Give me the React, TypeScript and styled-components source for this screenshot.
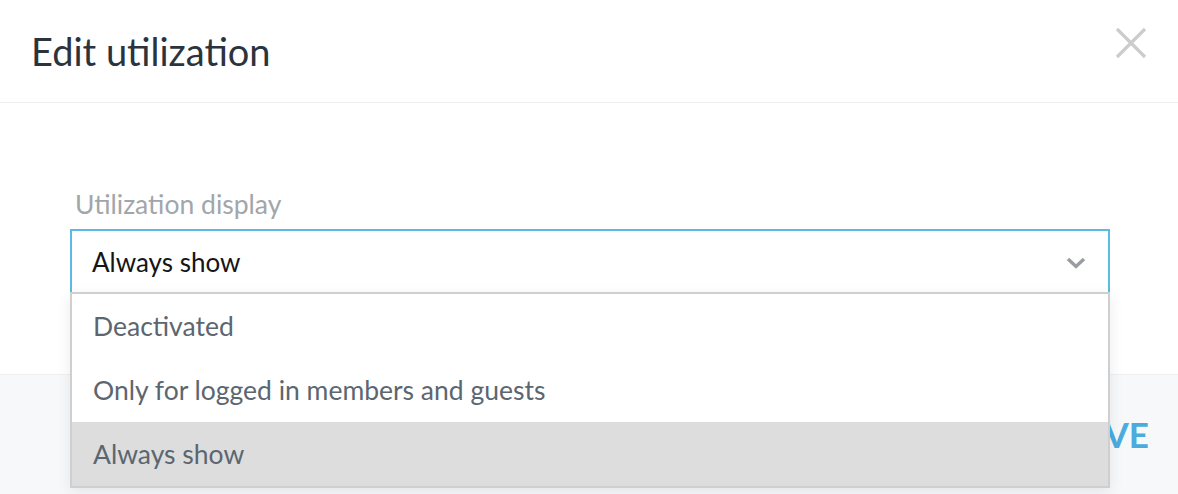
import React from "react";
import styled, { createGlobalStyle } from "styled-components";

const Global = createGlobalStyle`
  html, body { margin: 0; padding: 0; background: #fff; }
  body { font-family: Lato, "Open Sans", sans-serif; }
  * { box-sizing: border-box; }
`;

const Modal = styled.div`
  width: 1178px;
  height: 494px;
  display: flex;
  flex-direction: column;
  background: #fff;
  overflow: hidden;
`;

const Header = styled.header`
  height: 103px;
  flex: none;
  display: flex;
  align-items: center;
  justify-content: space-between;
  padding: 0 30px 0 31px;
  border-bottom: 1px solid #eeeff0;
`;

const Title = styled.h1`
  margin: 0;
  font-size: 38px;
  font-weight: 400;
  color: #2b333d;
  letter-spacing: 0;
`;

const CloseButton = styled.button`
  width: 34px;
  height: 34px;
  padding: 0;
  margin-bottom: 17px;
  border: none;
  background: none;
  display: flex;
  align-items: center;
  justify-content: center;
`;

const Body = styled.section`
  height: 271px;
  flex: none;
  padding: 86px 68px 0 70px;
`;

const Label = styled.label`
  display: block;
  margin: 0 0 10px 5px;
  font-size: 26.5px;
  color: #a2a6aa;
  line-height: 30px;
`;

const Field = styled.div`
  position: relative;
`;

const Select = styled.div`
  height: 64px;
  display: flex;
  align-items: center;
  justify-content: space-between;
  padding: 0 22px 0 20px;
  border: 2px solid #5cbbe3;
  border-bottom: none;
  font-size: 26px;
  color: #151515;
`;

const Menu = styled.ul`
  position: absolute;
  left: 0;
  right: 0;
  top: 63px;
  margin: 0;
  padding: 0;
  list-style: none;
  background: #fff;
  border: 2px solid #cfcfcf;
  box-shadow: 0 4px 14px rgba(0, 0, 0, 0.08);
  z-index: 2;
`;

const Option = styled.li<{ $active?: boolean }>`
  height: 64px;
  display: flex;
  align-items: center;
  padding: 0 21px;
  font-size: 26.5px;
  color: #5b6670;
  background: ${(p) => (p.$active ? "#dddddd" : "#fff")};
`;

const Footer = styled.footer`
  flex: 1;
  display: flex;
  align-items: center;
  justify-content: flex-end;
  padding: 0 29px 0 0;
  background: #f7f8fa;
  border-top: 1px solid #eeeff1;
`;

const SaveButton = styled.button`
  border: none;
  background: none;
  padding: 0;
  margin-bottom: 2px;
  font-family: Lato, "Open Sans", sans-serif;
  font-weight: 700;
  font-size: 35px;
  color: #4aabdf;
  letter-spacing: 0;
`;

const options = [
  "Deactivated",
  "Only for logged in members and guests",
  "Always show",
];

export default function App() {
  return (
    <>
      <Global />
      <Modal>
        <Header>
          <Title>Edit utilization</Title>
          <CloseButton aria-label="Close">
            <svg width="32" height="32" viewBox="0 0 32 32">
              <path d="M2 2 L30 30 M30 2 L2 30" stroke="#cccccc" strokeWidth="3.2" />
            </svg>
          </CloseButton>
        </Header>
        <Body>
          <Label>Utilization display</Label>
          <Field>
            <Select>
              <span>Always show</span>
              <svg width="20" height="13" viewBox="0 0 20 13">
                <polyline points="2,3 10,10.5 18,3" fill="none" stroke="#999da1" strokeWidth="3.4" />
              </svg>
            </Select>
            <Menu>
              {options.map((o) => (
                <Option key={o} $active={o === "Always show"}>
                  {o}
                </Option>
              ))}
            </Menu>
          </Field>
        </Body>
        <Footer>
          <SaveButton>SAVE</SaveButton>
        </Footer>
      </Modal>
    </>
  );
}
